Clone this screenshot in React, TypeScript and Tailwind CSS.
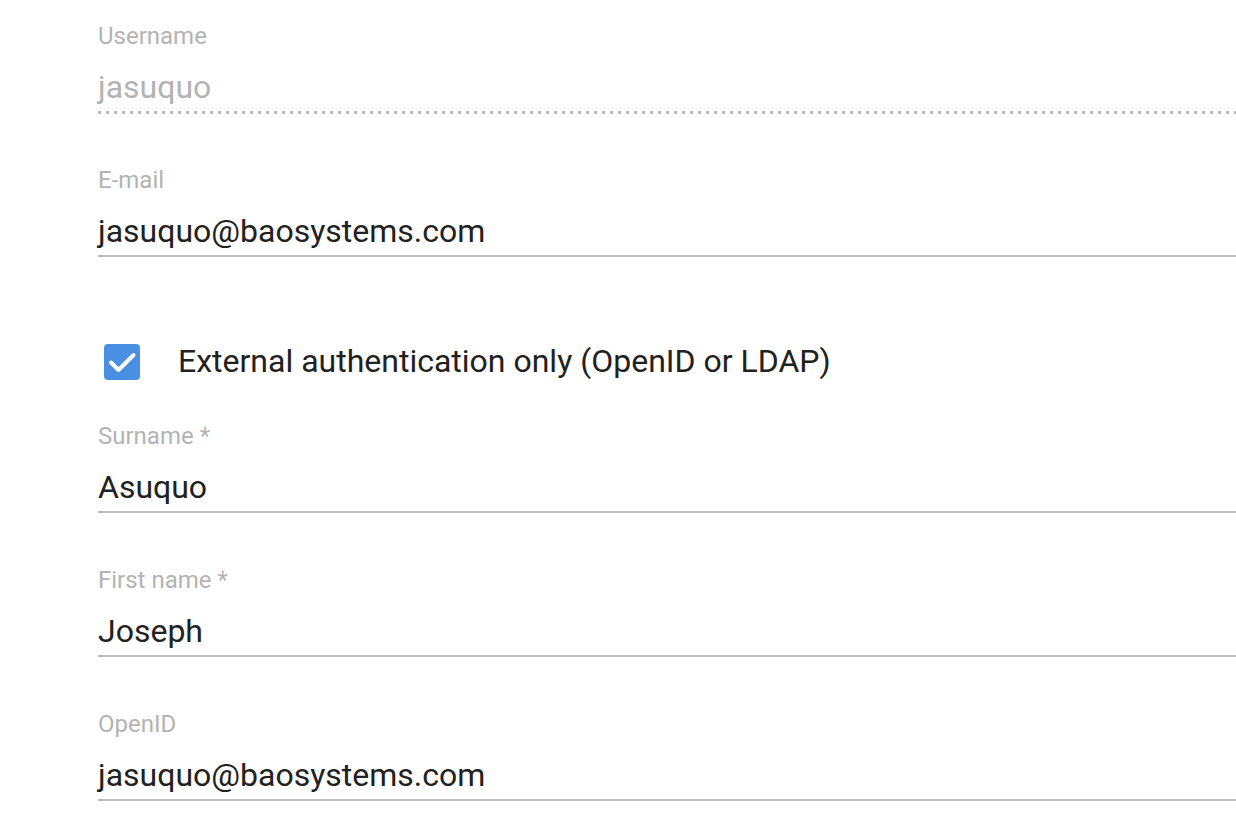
import React from "react";

const font = { fontFamily: "Roboto, 'Noto Sans', sans-serif" };

interface FieldProps {
  label: string;
  value: string;
  disabled?: boolean;
  className?: string;
}

const Field: React.FC<FieldProps> = ({ label, value, disabled = false, className = "" }) => (
  <div className={className}>
    <div className="text-[24px] leading-[24px] text-[#b3b3b3]">{label}</div>
    <div
      className={`mt-[23px] text-[32px] leading-[32px] whitespace-nowrap ${
        disabled ? "text-[#b3b3b3]" : "text-[#212121]"
      }`}
    >
      {value}
    </div>
    {disabled ? (
      <div className="mt-[8px] h-[3px] w-full bg-[repeating-linear-gradient(90deg,#b8b8b8_0px,#b8b8b8_3px,transparent_3px,transparent_8px)]" />
    ) : (
      <div className="mt-[8px] h-[2px] w-full bg-[#bdbdbd]" />
    )}
  </div>
);

const App: React.FC = () => {
  return (
    <div className="min-h-screen w-full bg-white overflow-hidden" style={font}>
      <div className="pl-[98px] pt-[24px]">
        <Field label="Username" value="jasuquo" disabled />
        <Field label="E-mail" value="jasuquo@baosystems.com" className="mt-[54px]" />

        <div className="mt-[87px] flex items-center">
          <div className="ml-[6px] flex h-[36px] w-[36px] items-center justify-center rounded-[4px] bg-[#4a90e2]">
            <svg width="36" height="36" viewBox="0 0 36 36" fill="none">
              <path
                d="M7 18.5L14.5 26L29.5 11"
                stroke="white"
                strokeWidth="4"
                strokeLinecap="round"
                strokeLinejoin="round"
              />
            </svg>
          </div>
          <span className="ml-[38px] -mt-[2px] text-[32px] leading-[32px] text-[#212121]">
            External authentication only (OpenID or LDAP)
          </span>
        </div>

        <Field label="Surname *" value="Asuquo" className="mt-[44px]" />
        <Field label="First name *" value="Joseph" className="mt-[55px]" />
        <Field label="OpenID" value="jasuquo@baosystems.com" className="mt-[55px]" />
      </div>
    </div>
  );
};

export default App;
